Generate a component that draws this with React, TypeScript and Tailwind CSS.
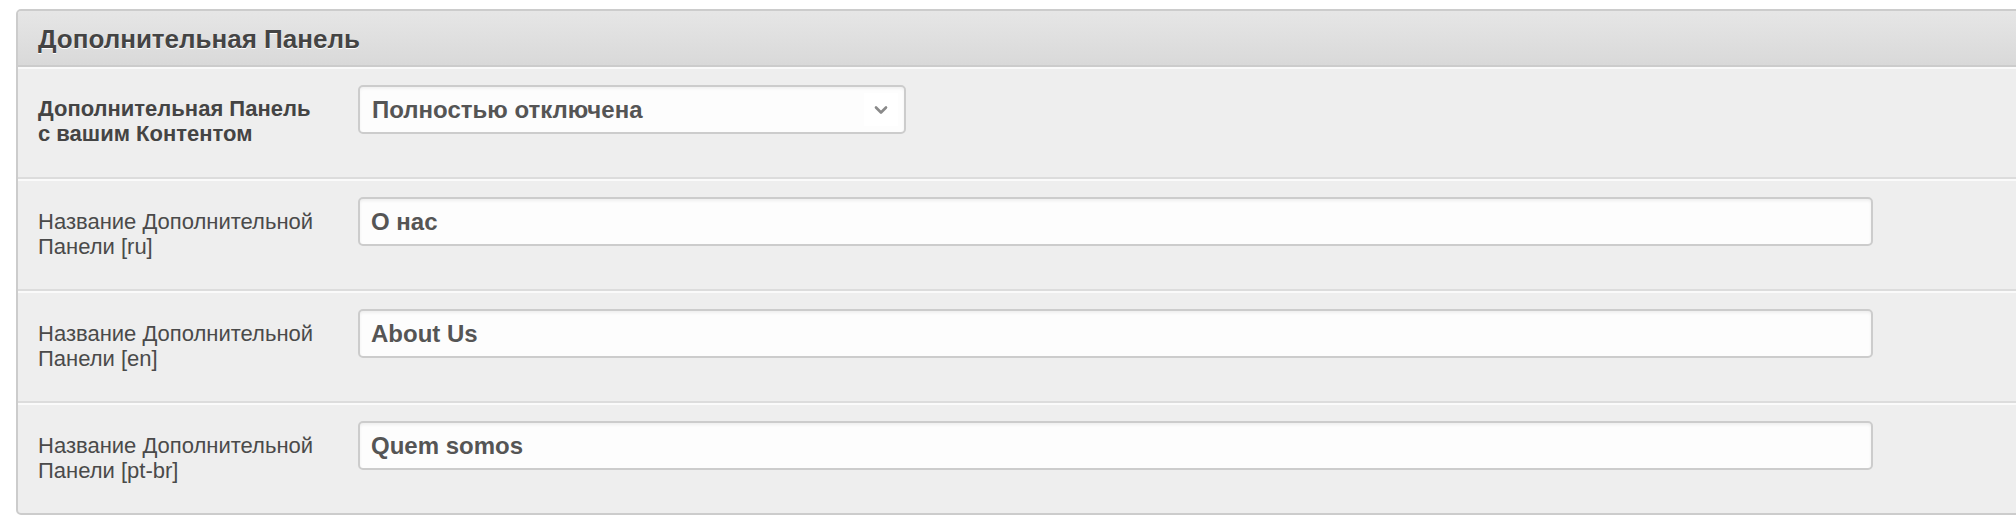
import { ChevronDown } from "lucide-react";

const titleRows = [
  { id: "ru", label: "Название Дополнительной", tag: "Панели [ru]", value: "О нас" },
  { id: "en", label: "Название Дополнительной", tag: "Панели [en]", value: "About Us" },
  { id: "pt-br", label: "Название Дополнительной", tag: "Панели [pt-br]", value: "Quem somos" },
];

const App = () => {
  return (
    <div className="w-full h-[516px] overflow-hidden bg-white pt-[9px] font-['Liberation_Sans',Arial,sans-serif]">
      <div className="ml-4 mr-[-12px] border-2 border-[#cccccc] rounded-[5px] bg-[#eeeeee] overflow-hidden">
        {/* header */}
        <div className="h-[56px] flex items-center pl-5 pt-[2px] bg-gradient-to-b from-[#e6e6e6] to-[#d9d9d9] border-b-2 border-[#cccccc]">
          <h2 className="text-[26px] font-bold text-[#444444] [text-shadow:0_1px_0_#ffffff]">
            Дополнительная Панель
          </h2>
        </div>

        {/* enable row */}
        <div className="flex min-h-[112px] pl-5 pt-[16px] border-t-2 border-[#fafafa] border-b-2 border-b-[#dcdcdc]">
          <div className="w-[320px] pt-[11px] text-[22px] leading-[25px] font-bold text-[#444444]">
            <div>Дополнительная Панель</div>
            <div>с вашим Контентом</div>
          </div>
          <div className="relative w-[548px] h-[49px] rounded-[5px] border-2 border-[#cccccc] bg-[#fdfdfd] shadow-[inset_0_2px_3px_rgba(0,0,0,0.05)] flex items-center pl-[12px]">
            <span className="text-[24px] font-bold text-[#555555]">Полностью отключена</span>
            <div className="absolute right-[6px] top-[6px] w-[34px] h-[33px] bg-white flex items-center justify-center">
              <ChevronDown className="w-[20px] h-[20px] text-[#8a8a8a]" strokeWidth={3.2} />
            </div>
          </div>
        </div>

        {titleRows.map((row, i) => (
          <div
            key={row.id}
            className={
              i === titleRows.length - 1
                ? "flex min-h-[110px] pl-5 pt-[16px] border-t-2 border-[#fafafa]"
                : "flex min-h-[112px] pl-5 pt-[16px] border-t-2 border-[#fafafa] border-b-2 border-b-[#dcdcdc]"
            }
          >
            <div className="w-[320px] pt-[12px] text-[22px] leading-[25px] text-[#4a4a4a]">
              <div>{row.label}</div>
              <div>{row.tag}</div>
            </div>
            <input
              type="text"
              defaultValue={row.value}
              className="w-[1515px] h-[49px] rounded-[5px] border-2 border-[#cccccc] bg-[#fdfdfd] shadow-[inset_0_2px_3px_rgba(0,0,0,0.06)] pl-[11px] text-[24px] font-bold text-[#555555] outline-none"
            />
          </div>
        ))}
      </div>
    </div>
  );
};

export default App;
